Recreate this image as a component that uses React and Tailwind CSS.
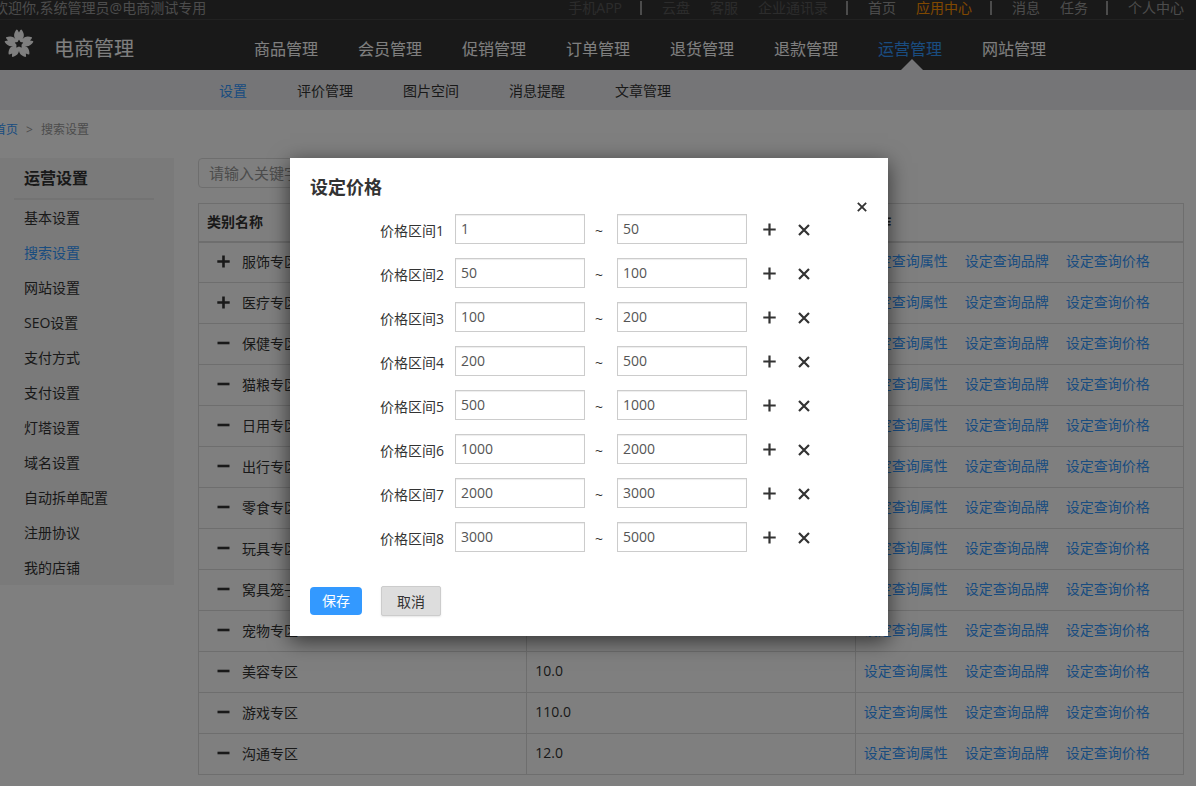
const TOP_LINKS = [
  [{ label: '手机APP', tone: 'text-[#595959]' }],
  [
    { label: '云盘', tone: 'text-[#595959]' },
    { label: '客服', tone: 'text-[#595959]' },
    { label: '企业通讯录', tone: 'text-[#595959]' },
  ],
  [
    { label: '首页', tone: 'text-[#999999]' },
    { label: '应用中心', tone: 'text-[#ff9100]' },
  ],
  [
    { label: '消息', tone: 'text-[#999999]' },
    { label: '任务', tone: 'text-[#999999]' },
  ],
  [{ label: '个人中心', tone: 'text-[#999999]' }],
];

const MAIN_NAV = ['商品管理', '会员管理', '促销管理', '订单管理', '退货管理', '退款管理', '运营管理', '网站管理'];
const SUB_NAV = ['设置', '评价管理', '图片空间', '消息提醒', '文章管理'];
const SIDE_NAV = ['基本设置', '搜索设置', '网站设置', 'SEO设置', '支付方式', '支付设置', '灯塔设置', '域名设置', '自动拆单配置', '注册协议', '我的店铺'];

const CATEGORIES = [
  { name: '服饰专区', expandable: true },
  { name: '医疗专区', expandable: true },
  { name: '保健专区' },
  { name: '猫粮专区' },
  { name: '日用专区' },
  { name: '出行专区' },
  { name: '零食专区' },
  { name: '玩具专区' },
  { name: '窝具笼子' },
  { name: '宠物专区' },
  { name: '美容专区', value: '10.0' },
  { name: '游戏专区', value: '110.0' },
  { name: '沟通专区', value: '12.0' },
];

const RANGES = [
  [1, 50],
  [50, 100],
  [100, 200],
  [200, 500],
  [500, 1000],
  [1000, 2000],
  [2000, 3000],
  [3000, 5000],
];

function PlusIcon({ weight = 2 }) {
  return (
    <svg viewBox="0 0 13 13" className="block size-[13px]" stroke="currentColor" strokeWidth={weight} aria-hidden="true">
      <path d="M0.3 6.5H12.7M6.5 0.5V12.5" />
    </svg>
  );
}

function MinusIcon() {
  return (
    <svg viewBox="0 0 13 13" className="block size-[13px]" stroke="currentColor" strokeWidth="2.6" aria-hidden="true">
      <path d="M0.5 6H12.5" />
    </svg>
  );
}

function CrossIcon({ className }) {
  return (
    <svg viewBox="0 0 12 12" className={className} stroke="currentColor" strokeWidth="2.2" aria-hidden="true">
      <path d="M1 1L11 11M11 1L1 11" />
    </svg>
  );
}

function Logo() {
  return (
    <svg viewBox="-15 -15 30 30" className="block size-[30px]" fill="#ffffff" aria-hidden="true">
      {[0, 72, 144, 216, 288].map((angle) => (
        <path
          key={angle}
          transform={`rotate(${angle})`}
          d="M0 -4.6L-3.3 -4.5C-5.6 -7.2 -5.4 -10.8 -2.4 -14.4L-1.4 -14L0 -11.6L1.4 -14L2.4 -14.4C5.4 -10.8 5.6 -7.2 3.3 -4.5Z"
        />
      ))}
      <path
        fillRule="evenodd"
        d="M-6.6 0A6.6 6.6 0 1 0 6.6 0A6.6 6.6 0 1 0 -6.6 0ZM0 -4.6L1.5 -2.1L4.4 -1.4L2.5 0.8L2.7 3.7L0 2.6L-2.7 3.7L-2.5 0.8L-4.4 -1.4L-1.5 -2.1Z"
      />
    </svg>
  );
}

function Header() {
  return (
    <header>
      <div className="bg-[#333333]">
        <div className="-ml-1.5 mr-3 flex h-5 items-start justify-between border-b border-[#444444] text-sm leading-4 whitespace-nowrap">
          <span className="text-[#999999]">欢迎你,系统管理员@电商测试专用</span>
          <nav className="flex items-center gap-[18px]" aria-label="快捷入口">
            {TOP_LINKS.map((group, i) => (
              <div key={i} className="flex items-center gap-5">
                {i > 0 && <span className="h-3.5 w-0.5 bg-[#999999]" />}
                {group.map((link) => (
                  <a key={link.label} href="#" className={link.tone}>
                    {link.label}
                  </a>
                ))}
              </div>
            ))}
          </nav>
        </div>
        <div className="flex h-[50px] items-center whitespace-nowrap">
          <div className="flex w-[254px] shrink-0 items-center gap-5 pb-0.5 pl-1">
            <Logo />
            <span className="pt-2.5 text-xl leading-6 text-white">电商管理</span>
          </div>
          <nav className="flex h-full gap-10 pt-2 text-base leading-[42px] text-white" aria-label="主导航">
            {MAIN_NAV.map((label) =>
              label === '运营管理' ? (
                <a key={label} href="#" className="relative text-[#3399ff]">
                  {label}
                  <span className="absolute bottom-0 left-[23px] border-x-[11px] border-b-[11px] border-x-transparent border-b-[#ebebee]" />
                </a>
              ) : (
                <a key={label} href="#">
                  {label}
                </a>
              ),
            )}
          </nav>
        </div>
      </div>
      <nav className="flex h-10 items-center gap-[50px] bg-[#ebebee] pt-0.5 pl-[219px] text-sm whitespace-nowrap" aria-label="子导航">
        {SUB_NAV.map((label, i) => (
          <a key={label} href="#" className={i === 0 ? 'text-[#3399ff]' : 'text-[#333333]'}>
            {label}
          </a>
        ))}
      </nav>
    </header>
  );
}

function Sidebar() {
  return (
    <aside className="w-[174px] shrink-0 self-start bg-[#f4f4f4]">
      <h2 className="mr-5 ml-3.5 h-[42px] border-b-2 border-[#e6e6e6] pl-2.5 text-base leading-10 font-bold">运营设置</h2>
      <ul>
        {SIDE_NAV.map((label) => (
          <li key={label} className="h-[35px] pl-6 text-sm leading-[35px]">
            <a href="#" className={label === '搜索设置' ? 'text-[#3399ff]' : 'text-[#333333]'}>
              {label}
            </a>
          </li>
        ))}
      </ul>
    </aside>
  );
}

function CategoryTable() {
  return (
    <table className="mt-[15px] w-full table-fixed border-collapse border border-[#dddddd] text-left text-sm">
      <thead>
        <tr className="h-[38px] border-b-2 border-[#dddddd]">
          <th className="px-2 font-bold">类别名称</th>
          <th className="px-2 font-bold" />
          <th className="px-2 font-bold">操作</th>
        </tr>
      </thead>
      <tbody>
        {CATEGORIES.map((row) => (
          <tr key={row.name} className="h-[41px]">
            <td className="border border-[#dddddd] pl-[18px]">
              <div className="flex items-center gap-3">
                <span className="pb-0.5">
                  {row.expandable ? (
                    <button type="button" aria-label={`展开${row.name}`} className="block">
                      <PlusIcon weight={2.6} />
                    </button>
                  ) : (
                    <MinusIcon />
                  )}
                </span>
                <span>{row.name}</span>
              </div>
            </td>
            <td className="border border-[#dddddd] px-2 pb-0.5">{row.value}</td>
            <td className="border border-[#dddddd] px-2 pb-0.5">
              <div className="flex gap-[17px] whitespace-nowrap text-[#3399ff]">
                <a href="#">设定查询属性</a>
                <a href="#">设定查询品牌</a>
                <a href="#">设定查询价格</a>
              </div>
            </td>
          </tr>
        ))}
      </tbody>
    </table>
  );
}

function PriceInput({ id, label, value }) {
  return (
    <input
      id={id}
      type="text"
      aria-label={label}
      defaultValue={value}
      className="h-[30px] w-[130px] border border-[#cccccc] bg-white px-[5px] pb-0.5 text-sm text-[#555555] shadow-[inset_0_1px_1px_rgba(0,0,0,0.075)]"
    />
  );
}

function PriceDialog() {
  return (
    <div
      role="dialog"
      aria-modal="true"
      aria-labelledby="price-title"
      className="relative w-[598px] bg-white px-5 pt-[17px] pb-5 text-sm text-[#333333] shadow-[0_5px_20px_rgba(0,0,0,0.6)]"
    >
      <h1 id="price-title" className="text-lg leading-6 font-bold">
        设定价格
      </h1>
      <button type="button" aria-label="关闭" className="absolute top-[43px] right-5 p-px">
        <CrossIcon className="block size-[10px]" />
      </button>
      <form>
        <div className="mt-[15px] flex flex-col gap-3.5 pl-[70px]">
          {RANGES.map(([from, to], i) => (
            <div key={i} className="flex items-center">
              <label htmlFor={`from-${i}`} className="w-[75px] pt-1">
                价格区间{i + 1}
              </label>
              <PriceInput id={`from-${i}`} value={from} />
              <span className="w-8 pt-1 pr-1 text-center">~</span>
              <PriceInput id={`to-${i}`} label={`价格区间${i + 1}上限`} value={to} />
              <button type="button" aria-label="添加区间" className="ml-4 pt-px">
                <PlusIcon weight={2.2} />
              </button>
              <button type="button" aria-label="删除区间" className="ml-[22px] pt-px">
                <CrossIcon className="block size-3" />
              </button>
            </div>
          ))}
        </div>
        <div className="mt-[34px] flex items-center gap-[19px]">
          <button type="button" className="h-7 w-[52px] rounded-sm bg-[#3399ff] text-white">
            保存
          </button>
          <button
            type="button"
            className="h-[30px] w-[60px] rounded-xs border border-[#cccccc] bg-[#dddddd] pt-px shadow-[0_1px_2px_rgba(0,0,0,0.1)]"
          >
            取消
          </button>
        </div>
      </form>
    </div>
  );
}

export default function App() {
  return (
    <div className="relative min-h-screen overflow-hidden bg-white font-['Open_Sans','Noto_Sans_CJK_SC',sans-serif] text-[#333333]">
      <Header />
      <div className="-ml-1.5 flex h-12 items-center gap-2 pb-2 text-xs whitespace-nowrap text-[#999999]">
        <a href="#" className="text-[#3399ff]">
          首页
        </a>
        <span>&gt;</span>
        <span>搜索设置</span>
      </div>
      <div className="flex gap-6 pr-3 pb-[11px]">
        <Sidebar />
        <main className="min-w-0 flex-1">
          <input
            type="search"
            aria-label="关键字"
            placeholder="请输入关键字"
            className="block h-[30px] w-[200px] rounded-sm border border-[#dddddd] bg-white px-2.5 text-[15px] placeholder:text-[#999999]"
          />
          <CategoryTable />
        </main>
      </div>
      <div className="absolute inset-0 flex items-start justify-center bg-black/50 pt-[158px] pr-[18px]">
        <PriceDialog />
      </div>
    </div>
  );
}
